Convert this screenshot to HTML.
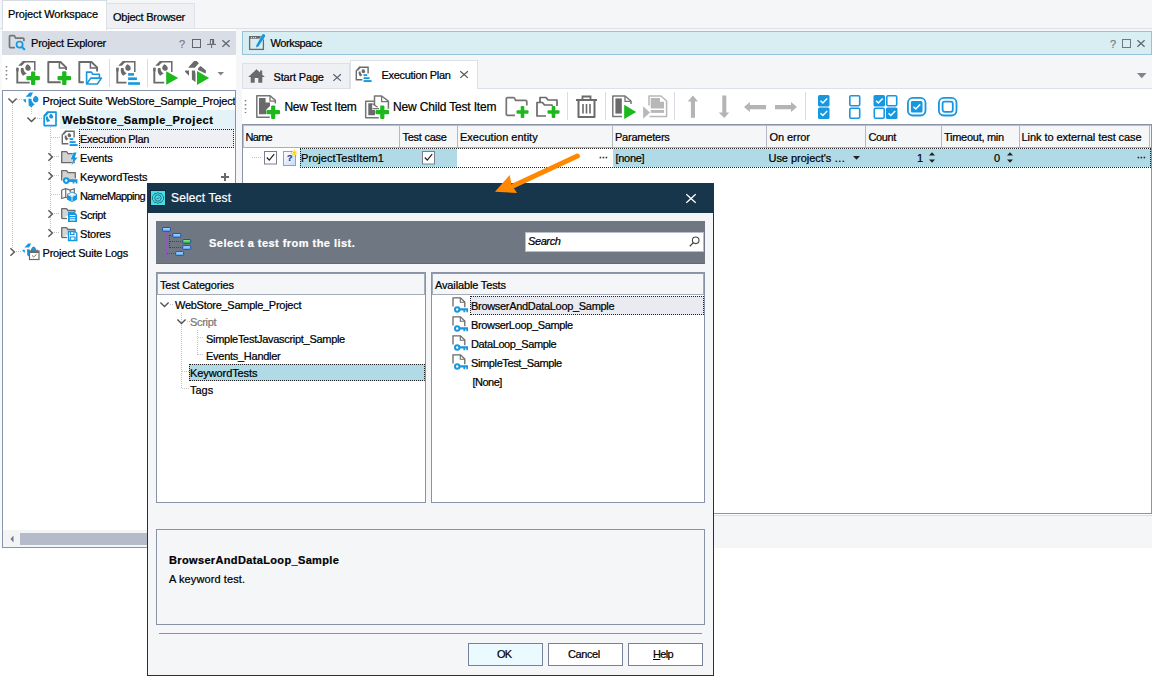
<!DOCTYPE html>
<html lang="en"><head><meta charset="utf-8"><title>Select Test</title><style>
html,body{margin:0;padding:0;}
body{width:1153px;height:678px;position:relative;overflow:hidden;background:#fff;font-family:"Liberation Sans", sans-serif;font-size:11px;color:#000;}
body>div,body>svg,.t{position:absolute;box-sizing:border-box;}
.t{white-space:nowrap;-webkit-text-stroke:0.22px currentColor;}
svg{overflow:visible;}
</style></head>
<body>
<div style="left:0px;top:0px;width:1152px;height:29px;background:#f5f6f8;"></div>
<div style="left:0px;top:28px;width:1152px;height:1px;background:#dde0e7;"></div>
<div style="left:236px;top:29px;width:916px;height:26px;background:#f5f6f8;"></div>
<div style="left:236px;top:55px;width:6px;height:493px;background:#f5f6f8;"></div>
<div style="left:0px;top:29px;width:2px;height:519px;background:#f8f9fa;"></div>
<div style="left:2px;top:0px;width:105px;height:30px;background:#fff;border:1px solid #d5dae3;border-bottom:none;"></div>
<div style="left:106px;top:3px;width:89px;height:26px;background:#eef0f4;border:1px solid #dde0e7;"></div>
<span class="t" style="left:8.00px;top:8px;font-size:11px;line-height:13px;letter-spacing:-0.125px;">Project Workspace</span>
<span class="t" style="left:113.00px;top:11px;font-size:11px;line-height:13px;letter-spacing:-0.231px;">Object Browser</span>
<div style="left:2px;top:31px;width:234px;height:24px;background:#d9dde6;"></div>
<span class="t" style="left:31.00px;top:37px;font-size:11px;line-height:13px;letter-spacing:-0.200px;">Project Explorer</span>
<svg style="left:8px;top:34px;" width="18" height="18" viewBox="0 0 18 18"><path d="M7,13.6 H2.4 Q1.5,13.6 1.5,12.7 V2.6 Q1.5,1.7 2.4,1.7 H5.6 Q6.4,1.7 6.8,2.5 L7.6,4.2 H15 Q15.9,4.2 15.9,5.1 V7.2" fill="none" stroke="#757575" stroke-width="1.7"/><circle cx="11.6" cy="10.6" r="3.1" fill="none" stroke="#1797e0" stroke-width="1.7"/><path d="M13.9,12.9 L16.3,15.2" stroke="#1797e0" stroke-width="2.1" stroke-linecap="round"/></svg>
<span class="t" style="left:179.00px;top:38px;font-size:11px;line-height:13px;color:#777c8a;">?</span>
<svg style="left:192px;top:39px;" width="10" height="10" viewBox="0 0 10 10"><rect x="0.5" y="0.5" width="8" height="8" fill="none" stroke="#5f6673" stroke-width="1"/></svg>
<svg style="left:207px;top:39px;" width="9" height="9" viewBox="0 0 9 9"><path d="M3,0.5 H7 M3.4,0.5 V5 M0,5.4 H9 M4.6,5.4 V9" fill="none" stroke="#5f6673" stroke-width="1"/><rect x="5.2" y="0.5" width="1.9" height="4.6" fill="#5f6673"/></svg>
<svg style="left:222px;top:40px;" width="8" height="7" viewBox="0 0 8 7"><path d="M0.4,0.2 L7.6,6.8 M7.6,0.2 L0.4,6.8" stroke="#5f6673" stroke-width="1.25"/></svg>
<div style="left:2px;top:55px;width:234px;height:35px;background:#fff;"></div>
<svg style="left:5px;top:65px;" width="3" height="18" viewBox="0 0 3 18"><path d="M1.5,1 V17" stroke="#858585" stroke-width="1.6" stroke-dasharray="1.6,2.4"/></svg>
<svg style="left:16px;top:60px;" width="24" height="25" viewBox="0 0 24 25"><path d="M6.8,1.7 H18.8 V10.5" fill="none" stroke="#6a6a6a" stroke-width="1.5"/><path d="M2.2,5.8 L6.8,1 L9.6,1.7 L5.8,5.8 Z" fill="#6a6a6a"/><path d="M1.3,7.8 V22.6 H13.7" fill="none" stroke="#6a6a6a" stroke-width="1.9"/><rect x="0.35" y="7.8" width="2.3" height="3.6" fill="#6a6a6a"/><path d="M5,8 C4.2,11 5,14 7.2,15.8 L10.8,13.2 C8.6,12.4 7.5,10.4 7.5,8 Z" fill="#6a6a6a"/><path d="M11.3,4.2 C13.6,5 15.1,7 14.7,8.9 C14.1,10.9 11.2,11.3 9.8,9.7 C8.6,8 9.4,5.6 11.3,4.2 Z" fill="#6a6a6a"/><rect x="10.399999999999999" y="16.049999999999997" width="13.5" height="4.2" rx="1" fill="#1cb81c"/><rect x="15.049999999999999" y="11.399999999999999" width="4.2" height="13.5" rx="1" fill="#1cb81c"/></svg>
<svg style="left:47px;top:60px;" width="24" height="25" viewBox="0 0 24 25"><path d="M13.7,22.3 H1.3 V2 H13.5 L19.1,7.4 V10" fill="none" stroke="#6a6a6a" stroke-width="1.9" stroke-linejoin="round"/><path d="M12.4,2 V8 H19" fill="none" stroke="#6a6a6a" stroke-width="1.5"/><rect x="10.5" y="15.950000000000001" width="13.6" height="4.3" rx="1" fill="#1cb81c"/><rect x="15.15" y="11.3" width="4.3" height="13.6" rx="1" fill="#1cb81c"/></svg>
<svg style="left:78px;top:60px;" width="24" height="25" viewBox="0 0 24 25"><path d="M5.8,22.3 H1.3 V2 H13.5 L19.1,7.4 V11.5" fill="none" stroke="#6a6a6a" stroke-width="1.9" stroke-linejoin="round"/><path d="M12.4,2 V8 H19" fill="none" stroke="#6a6a6a" stroke-width="1.5"/><path d="M8.6,23.5 V12.1 H13.4 L14.6,14.2 H21.4 V17.5" fill="#fff" stroke="#1797e0" stroke-width="1.6" stroke-linejoin="round"/><path d="M8.6,24 L12.8,18.1 H23.4 L19.3,24 Z" fill="#fff" stroke="#1797e0" stroke-width="1.6" stroke-linejoin="round"/></svg>
<div style="left:109px;top:59px;width:1px;height:28px;background:#d9dce2;"></div>
<svg style="left:116px;top:60px;" width="24" height="25" viewBox="0 0 24 25"><path d="M6.8,1.7 H18.8 V12" fill="none" stroke="#6a6a6a" stroke-width="1.5"/><path d="M2.2,5.8 L6.8,1 L9.6,1.7 L5.8,5.8 Z" fill="#6a6a6a"/><path d="M1.3,7.8 V22.6 H10.4" fill="none" stroke="#6a6a6a" stroke-width="1.9"/><rect x="0.35" y="7.8" width="2.3" height="3.6" fill="#6a6a6a"/><path d="M5,8 C4.2,11 5,14 7.2,15.8 L10.8,13.2 C8.6,12.4 7.5,10.4 7.5,8 Z" fill="#6a6a6a"/><path d="M11.3,4.2 C13.6,5 15.1,7 14.7,8.9 C14.1,10.9 11.2,11.3 9.8,9.7 C8.6,8 9.4,5.6 11.3,4.2 Z" fill="#6a6a6a"/><rect x="12.1" y="13.1" width="5.9" height="2.6" fill="#1797e0"/><rect x="12.1" y="17.4" width="8.8" height="2.7" fill="#1797e0"/><rect x="12.1" y="22.2" width="11.9" height="2.6" fill="#1797e0"/></svg>
<div style="left:147px;top:59px;width:1px;height:28px;background:#d9dce2;"></div>
<svg style="left:153px;top:60px;" width="24" height="25" viewBox="0 0 24 25"><path d="M6.8,1.7 H18.8 V12" fill="none" stroke="#6a6a6a" stroke-width="1.5"/><path d="M2.2,5.8 L6.8,1 L9.6,1.7 L5.8,5.8 Z" fill="#6a6a6a"/><path d="M1.3,7.8 V22.6 H11.2" fill="none" stroke="#6a6a6a" stroke-width="1.9"/><rect x="0.35" y="7.8" width="2.3" height="3.6" fill="#6a6a6a"/><path d="M5,8 C4.2,11 5,14 7.2,15.8 L10.8,13.2 C8.6,12.4 7.5,10.4 7.5,8 Z" fill="#6a6a6a"/><path d="M11.3,4.2 C13.6,5 15.1,7 14.7,8.9 C14.1,10.9 11.2,11.3 9.8,9.7 C8.6,8 9.4,5.6 11.3,4.2 Z" fill="#6a6a6a"/><path d="M13.2,11.2 L25.2,18 L13.2,24.8 Z" fill="#1cb81c"/></svg>
<svg style="left:184px;top:60px;" width="26" height="25" viewBox="0 0 26 25"><path d="M4,7.7 L10.1,1.1 L12.7,1.1 L14.9,3.3 L10.8,7.7 Z" fill="#6a6a6a"/><path d="M14.2,7.9 L16.6,6 L22,10.6 L21.7,13.6 L14,9.9 Z" fill="#6a6a6a"/><path d="M1.1,10.6 H5 V15.7 L1.1,12 Z" fill="#6a6a6a"/><path d="M7.9,10.6 H10.8 L11.5,13.7 V22 L7.9,19.6 Z" fill="#6a6a6a"/><path d="M13,11.1 L25.1,18.1 L13,25 Z" fill="#1cb81c"/></svg>
<svg style="left:217px;top:72px;" width="8" height="4" viewBox="0 0 8 4"><path d="M0.5,0 H7 L3.75,3.5 Z" fill="#808080"/></svg>
<div style="left:2px;top:90px;width:234px;height:458px;background:#fff;border:1px solid #8794ab;"></div>
<div style="left:60px;top:110px;width:175px;height:19px;background:#e4f3f8;"></div>
<div style="left:79px;top:129px;width:155px;height:19px;background:#eef0f4;border:1px dotted #222;"></div>
<svg style="left:3px;top:90px;" width="100" height="170" viewBox="0 0 100 170"><g stroke="#c2c2c2" stroke-width="1" stroke-dasharray="1,1" fill="none"><path d="M9.5,13 V158"/><path d="M14,9.5 H20"/><path d="M28.5,17 V25"/><path d="M34,28.5 H39"/><path d="M47.5,37 V143"/><path d="M48,47.5 H57"/><path d="M51,66.5 H57"/><path d="M51,85.5 H57"/><path d="M48,104.5 H57"/><path d="M51,123.5 H57"/><path d="M51,142.5 H57"/><path d="M13,161.5 H19"/></g></svg>
<svg style="left:8px;top:98px;" width="9" height="5" viewBox="0 0 9 5"><path d="M0.4,0.4 L4.5,4.4 L8.6,0.4" fill="none" stroke="#555" stroke-width="1.4"/></svg>
<svg style="left:27px;top:117px;" width="9" height="5" viewBox="0 0 9 5"><path d="M0.4,0.4 L4.5,4.4 L8.6,0.4" fill="none" stroke="#555" stroke-width="1.4"/></svg>
<svg style="left:48px;top:153px;" width="5" height="8" viewBox="0 0 5 8"><path d="M0.4,0.3 L4.4,4 L0.4,7.7" fill="none" stroke="#555" stroke-width="1.4"/></svg>
<svg style="left:48px;top:172px;" width="5" height="8" viewBox="0 0 5 8"><path d="M0.4,0.3 L4.4,4 L0.4,7.7" fill="none" stroke="#555" stroke-width="1.4"/></svg>
<svg style="left:48px;top:210px;" width="5" height="8" viewBox="0 0 5 8"><path d="M0.4,0.3 L4.4,4 L0.4,7.7" fill="none" stroke="#555" stroke-width="1.4"/></svg>
<svg style="left:48px;top:229px;" width="5" height="8" viewBox="0 0 5 8"><path d="M0.4,0.3 L4.4,4 L0.4,7.7" fill="none" stroke="#555" stroke-width="1.4"/></svg>
<svg style="left:10px;top:248px;" width="5" height="8" viewBox="0 0 5 8"><path d="M0.4,0.3 L4.4,4 L0.4,7.7" fill="none" stroke="#555" stroke-width="1.4"/></svg>
<svg style="left:24px;top:93px;" width="15" height="15" viewBox="0 0 15 15"><path d="M1.6,3.8 L5.7,-0.5 L9.1,-0.5 L6.9,3.8 Z" fill="#1797e0"/><path d="M11.6,2.7 C13.8,3.2 14.8,5.4 14.4,7.3 C13.7,9.8 10.5,10.4 9.2,8.1 C8.4,6 9.5,3.5 11.6,2.7 Z" fill="#1797e0"/><path d="M-0.6,6.3 H2 V9.9 L-0.6,7.5 Z" fill="#1797e0"/><path d="M4.4,5.7 H7.4 C7.4,8 8.5,10 10.8,11.2 L7.2,14.2 L4.7,12.4 Z" fill="#1797e0"/></svg>
<svg style="left:43px;top:111px;" width="15" height="16" viewBox="0 0 15 16"><path d="M4.6,1.1 H13 V14.6 H1.2 V4.8 Z" fill="#fff" stroke="#1797e0" stroke-width="1.7" stroke-linejoin="round"/><path d="M0.4,5.2 L4.6,0.4 L6.6,1 L3,5.2 Z" fill="#1797e0"/><g transform="translate(-0.6,-0.2) scale(1.12)"><path d="M3.2,5.2 C2.7,7.2 3.2,9.1 4.7,10.3 L7,8.6 C5.6,8 4.9,6.8 4.9,5.2 Z" fill="#1797e0"/><path d="M7.3,2.7 C8.8,3.2 9.8,4.5 9.6,5.8 C9.2,7.1 7.3,7.3 6.4,6.3 C5.6,5.2 6.1,3.6 7.3,2.7 Z" fill="#1797e0"/></g></svg>
<svg style="left:61px;top:130px;" width="17" height="16" viewBox="0 0 17 16"><path d="M4.2,1.2 H13.1 V7.6" fill="none" stroke="#6a6a6a" stroke-width="1.4"/><path d="M1.3,4.6 V13.8 H7.4" fill="none" stroke="#6a6a6a" stroke-width="1.4"/><path d="M0.5,4.8 L4.2,0.5 L6.2,1.2 L3,4.8 Z" fill="#6a6a6a"/><g transform="translate(0.6,0.2)"><path d="M3.2,5.2 C2.7,7.2 3.2,9.1 4.7,10.3 L7,8.6 C5.6,8 4.9,6.8 4.9,5.2 Z" fill="#6a6a6a"/><path d="M7.3,2.7 C8.8,3.2 9.8,4.5 9.6,5.8 C9.2,7.1 7.3,7.3 6.4,6.3 C5.6,5.2 6.1,3.6 7.3,2.7 Z" fill="#6a6a6a"/></g><rect x="8.6" y="8.2" width="3.6" height="1.9" fill="#1797e0"/><rect x="8.6" y="11.2" width="6" height="1.9" fill="#1797e0"/><rect x="8.6" y="14.1" width="8" height="1.9" fill="#1797e0"/></svg>
<svg style="left:61px;top:151px;" width="17" height="15" viewBox="0 0 17 15"><path d="M0.7,11.7 V0.7 H5.6 L7,2.6 H13.3 V11.7 Z" fill="#d3d3d3" stroke="#6a6a6a" stroke-width="1.3" stroke-linejoin="round"/><path d="M12.6,1.6 L9.6,8.4 H12.2 L10.4,14.6 L16.4,6.4 H13.6 L15.6,1.6 Z" fill="#1797e0" stroke="#fff" stroke-width="0.8" paint-order="stroke"/></svg>
<svg style="left:61px;top:170px;" width="17" height="15" viewBox="0 0 17 15"><path d="M0.7,10.5 V0.7 H5.6 L7,2.6 H14.3 V8.5" fill="#d3d3d3" stroke="#6a6a6a" stroke-width="1.3" stroke-linejoin="round"/><rect x="1.4" y="7" width="12.2" height="3.5" fill="#d3d3d3"/><circle cx="5.2" cy="10.6" r="2.3" fill="#fff" stroke="#1797e0" stroke-width="2.1"/><path d="M7.8,9.3 H16.4 V13.6 H14.6 V11.9 H13.4 V13.6 H11.6 V11.9 H7.8 Z" fill="#1797e0"/></svg>
<svg style="left:61px;top:188px;" width="17" height="15" viewBox="0 0 17 15"><path d="M0.7,2 L4.7,0.7 L9.2,2 L13.3,0.7 V5" fill="none" stroke="#6a6a6a" stroke-width="1.2"/><path d="M0.7,2 V10.5 L4.7,9.2 L6,9.6 M4.7,0.7 V9.2 M9.2,2 V4" fill="none" stroke="#6a6a6a" stroke-width="1.2"/><path d="M11,3.6 L16,6 V11.5 L11,14.3 L6,11.5 V6 Z" fill="#1797e0"/><path d="M6.8,6.5 L11,8.6 L15.2,6.5 M11,8.6 V13.5" stroke="#fff" stroke-width="0.9" fill="none"/><path d="M11,4.6 L14.6,6.3 L11,8 L7.4,6.3 Z" fill="#fff"/></svg>
<svg style="left:61px;top:208px;" width="17" height="15" viewBox="0 0 17 15"><path d="M0.7,10.5 V0.7 H5.5 L7,2.5 H14 V4" fill="#d4d4d4" stroke="#6a6a6a" stroke-width="1.3" stroke-linejoin="round"/><path d="M0.7,10.5 H6" stroke="#6a6a6a" stroke-width="1.3"/><path d="M7,4 H13.5 L16,6.5 V14 H7 Z" fill="#1797e0"/><path d="M8.7,7.5 H14.3 M8.7,9.7 H14.3 M8.7,11.9 H14.3" stroke="#fff" stroke-width="1.1"/></svg>
<svg style="left:61px;top:227px;" width="17" height="15" viewBox="0 0 17 15"><path d="M0.7,10.5 V0.7 H5.5 L7,2.5 H14 V4" fill="#d4d4d4" stroke="#6a6a6a" stroke-width="1.3" stroke-linejoin="round"/><path d="M0.7,10.5 H6" stroke="#6a6a6a" stroke-width="1.3"/><path d="M7.5,4.5 H14 L15.8,6.3 V13.5 H7.5 Z" fill="#fff" stroke="#1797e0" stroke-width="1.4"/><path d="M9.5,4.5 V7.5 H13 V4.5 M9.3,13.5 V10 H14 V13.5" fill="none" stroke="#1797e0" stroke-width="1.2"/></svg>
<svg style="left:23px;top:244px;" width="17" height="16" viewBox="0 0 17 16"><g transform="scale(0.9)"><path d="M1.6,3.8 L5.7,-0.5 L9.1,-0.5 L6.9,3.8 Z" fill="#1797e0"/><path d="M11.6,2.7 C13.8,3.2 14.8,5.4 14.4,7.3 C13.7,9.8 10.5,10.4 9.2,8.1 C8.4,6 9.5,3.5 11.6,2.7 Z" fill="#1797e0"/><path d="M-0.6,6.3 H2 V9.9 L-0.6,7.5 Z" fill="#1797e0"/><path d="M4.4,5.7 H7.4 C7.4,8 8.5,10 10.8,11.2 L7.2,14.2 L4.7,12.4 Z" fill="#1797e0"/></g><rect x="6.5" y="7" width="9.5" height="8.5" fill="#fff" stroke="#6a6a6a" stroke-width="1.2"/><path d="M6.5,8 H16" stroke="#6a6a6a" stroke-width="2"/><path d="M8.5,5.5 V7.5 M14,5.5 V7.5" stroke="#6a6a6a" stroke-width="1.2"/><path d="M9,11.5 L10.7,13 L13.5,10.3" fill="none" stroke="#6a6a6a" stroke-width="1"/></svg>
<span class="t" style="left:42.50px;top:95px;font-size:11px;line-height:13px;letter-spacing:-0.189px;width:192.50px;overflow:hidden;">Project Suite 'WebStore_Sample_Project</span>
<span class="t" style="left:62.00px;top:114px;font-size:11px;line-height:13px;font-weight:bold;letter-spacing:0.500px;">WebStore_Sample_Project</span>
<span class="t" style="left:80.00px;top:133px;font-size:11px;line-height:13px;letter-spacing:-0.308px;">Execution Plan</span>
<span class="t" style="left:80.00px;top:152px;font-size:11px;line-height:13px;letter-spacing:-0.200px;">Events</span>
<span class="t" style="left:80.00px;top:171px;font-size:11px;line-height:13px;letter-spacing:-0.091px;">KeywordTests</span>
<span class="t" style="left:80.00px;top:190px;font-size:11px;line-height:13px;letter-spacing:-0.600px;">NameMapping</span>
<span class="t" style="left:80.00px;top:209px;font-size:11px;line-height:13px;letter-spacing:-0.400px;">Script</span>
<span class="t" style="left:80.00px;top:228px;font-size:11px;line-height:13px;letter-spacing:-0.200px;">Stores</span>
<span class="t" style="left:42.50px;top:247px;font-size:11px;line-height:13px;letter-spacing:-0.206px;">Project Suite Logs</span>
<svg style="left:221px;top:173px;" width="8" height="8" viewBox="0 0 8 8"><rect x="0" y="3" width="8" height="2" fill="#6a6a6a"/><rect x="3" y="0" width="2" height="8" fill="#6a6a6a"/></svg>
<div style="left:3px;top:530px;width:232px;height:17px;background:#f3f4f6;"></div>
<div style="left:20px;top:533px;width:215px;height:12px;background:#b5bbc9;"></div>
<svg style="left:10px;top:535px;" width="4" height="8" viewBox="0 0 4 8"><path d="M3.5,0.5 L0.5,4 L3.5,7.5 Z" fill="#6c7890"/></svg>
<div style="left:242px;top:31px;width:910px;height:24px;background:#d9eef3;border:1px solid #97c3da;"></div>
<svg style="left:249px;top:34px;" width="17" height="17" viewBox="0 0 17 17"><rect x="0.6" y="2.7" width="13.8" height="12.7" fill="none" stroke="#6a6a6a" stroke-width="1.3"/><rect x="0" y="2" width="11.5" height="2.7" fill="#6a6a6a"/><path d="M2,3.5 H3 M4,3.5 H5 M6,3.5 H7" stroke="#e6f0f2" stroke-width="0.9"/><path d="M13.3,0.6 Q14.4,-0.3 15.6,0.5 Q16.6,1.3 16,2.5 L9.4,12.6 L7.2,13.6 L7.4,11.2 Z" fill="#1797e0" stroke="#d9eef3" stroke-width="0.8" paint-order="stroke"/></svg>
<span class="t" style="left:270.50px;top:37px;font-size:11px;line-height:13px;letter-spacing:-0.375px;">Workspace</span>
<span class="t" style="left:1110.00px;top:38px;font-size:11px;line-height:13px;color:#777c8a;">?</span>
<svg style="left:1122px;top:39px;" width="10" height="10" viewBox="0 0 10 10"><rect x="0.5" y="0.5" width="8" height="8" fill="none" stroke="#6f7682" stroke-width="1"/></svg>
<svg style="left:1137px;top:40px;" width="8" height="7" viewBox="0 0 8 7"><path d="M0.4,0.2 L7.6,6.8 M7.6,0.2 L0.4,6.8" stroke="#5f6673" stroke-width="1.25"/></svg>
<div style="left:242px;top:55px;width:910px;height:34px;background:#f5f6f8;"></div>
<div style="left:242px;top:88px;width:910px;height:1px;background:#dde0e7;"></div>
<div style="left:242px;top:63px;width:108px;height:26px;background:#eef0f4;border:1px solid #dde0e7;"></div>
<div style="left:350px;top:60px;width:128px;height:29px;background:#fff;border:1px solid #dde0e7;border-bottom:none;"></div>
<svg style="left:248px;top:69px;" width="17" height="14" viewBox="0 0 17 14"><path d="M8.5,0.3 L16.8,8 H14.3 V13.7 H10.3 V9 H6.7 V13.7 H2.7 V8 H0.2 Z" fill="#6a6a6a"/><rect x="12" y="1.5" width="2.2" height="4" fill="#6a6a6a"/></svg>
<span class="t" style="left:273.50px;top:71px;font-size:11px;line-height:13px;letter-spacing:-0.167px;">Start Page</span>
<svg style="left:333px;top:73.5px;" width="8" height="7" viewBox="0 0 8 7"><path d="M0.3,0.2 L7.9,6.9 M7.9,0.2 L0.3,6.9" stroke="#5a6270" stroke-width="1.2"/></svg>
<svg style="left:355px;top:66px;" width="17" height="16" viewBox="0 0 17 16"><path d="M4.2,1.2 H13.1 V7.6" fill="none" stroke="#6a6a6a" stroke-width="1.4"/><path d="M1.3,4.6 V13.8 H7.4" fill="none" stroke="#6a6a6a" stroke-width="1.4"/><path d="M0.5,4.8 L4.2,0.5 L6.2,1.2 L3,4.8 Z" fill="#6a6a6a"/><g transform="translate(0.6,0.2)"><path d="M3.2,5.2 C2.7,7.2 3.2,9.1 4.7,10.3 L7,8.6 C5.6,8 4.9,6.8 4.9,5.2 Z" fill="#6a6a6a"/><path d="M7.3,2.7 C8.8,3.2 9.8,4.5 9.6,5.8 C9.2,7.1 7.3,7.3 6.4,6.3 C5.6,5.2 6.1,3.6 7.3,2.7 Z" fill="#6a6a6a"/></g><rect x="8.6" y="8.2" width="3.6" height="1.9" fill="#1797e0"/><rect x="8.6" y="11.2" width="6" height="1.9" fill="#1797e0"/><rect x="8.6" y="14.1" width="8" height="1.9" fill="#1797e0"/></svg>
<span class="t" style="left:381.50px;top:69px;font-size:11px;line-height:13px;letter-spacing:-0.308px;">Execution Plan</span>
<svg style="left:460px;top:71px;" width="8" height="7" viewBox="0 0 8 7"><path d="M0.3,0.2 L7.9,6.9 M7.9,0.2 L0.3,6.9" stroke="#555" stroke-width="1.2"/></svg>
<svg style="left:1137px;top:73px;" width="10" height="6" viewBox="0 0 10 6"><path d="M0,0 H9.5 L4.75,5.2 Z" fill="#7f848e"/></svg>
<div style="left:242px;top:89px;width:910px;height:35px;background:#fff;"></div>
<svg style="left:244px;top:99px;" width="3" height="15" viewBox="0 0 3 15"><path d="M1.5,1 V14" stroke="#858585" stroke-width="1.6" stroke-dasharray="1.6,2.4"/></svg>
<svg style="left:256px;top:95px;" width="25" height="25" viewBox="0 0 25 25"><path d="M13.8,22.2 H0.8 V0.8 H14.1 L19.3,5.4 V8.5" fill="none" stroke="#757575" stroke-width="1.5" stroke-linejoin="round"/><path d="M3,3 H9.6 V7.5 H14 V11 L10,15 V19.3 H3 Z" fill="#6a6a6a"/><path d="M14,0.8 V6.2 H19.3" fill="none" stroke="#757575" stroke-width="1.3"/><rect x="10.399999999999999" y="15.1" width="13.6" height="4.2" rx="1" fill="#1cb81c"/><rect x="15.1" y="10.399999999999999" width="4.2" height="13.6" rx="1" fill="#1cb81c"/></svg>
<span class="t" style="left:284.50px;top:100px;font-size:12px;line-height:14px;letter-spacing:-0.292px;">New Test Item</span>
<svg style="left:364px;top:95px;" width="26" height="25" viewBox="0 0 26 25"><path d="M14.8,22.7 H1.7 V6.2 H10" fill="none" stroke="#757575" stroke-width="1.5" stroke-linejoin="round"/><path d="M4.3,8.2 H8.2 V15 H11 V20.3 H4.3 Z" fill="#6a6a6a"/><path d="M10.5,10 V1 H17.6 L24.4,6.1 V13.7" fill="none" stroke="#757575" stroke-width="1.5" stroke-linejoin="round"/><path d="M17.6,1 V6.6 H24.4" fill="none" stroke="#757575" stroke-width="1.3"/><path d="M8.4,8.6 L13.6,12.2 M8.6,13.6 H15" fill="none" stroke="#757575" stroke-width="1.3"/><rect x="11.5" y="15.1" width="13.6" height="4.2" rx="1" fill="#1cb81c"/><rect x="16.2" y="10.399999999999999" width="4.2" height="13.6" rx="1" fill="#1cb81c"/></svg>
<span class="t" style="left:393.00px;top:100px;font-size:12px;line-height:14px;letter-spacing:-0.167px;">New Child Test Item</span>
<svg style="left:505px;top:96px;" width="24" height="23" viewBox="0 0 24 23"><path d="M10,19.3 H2.5 Q1.3,19.3 1.3,18 V2.8 Q1.3,1.6 2.5,1.6 H8.5 Q9.4,1.6 9.8,2.6 L10.6,4.4 H20.5 Q21.8,4.4 21.8,5.6 V9.5" fill="none" stroke="#757575" stroke-width="1.7"/><rect x="11.5" y="14.2" width="12" height="3.6" rx="1" fill="#1cb81c"/><rect x="15.7" y="10" width="3.6" height="12" rx="1" fill="#1cb81c"/></svg>
<svg style="left:536px;top:96px;" width="24" height="23" viewBox="0 0 24 23"><path d="M4,6 V1.5 H10 L12,4 H21 V10" fill="none" stroke="#6a6a6a" stroke-width="1.7" stroke-linejoin="round"/><path d="M10,20 H1 V6.5 H6.5 L8.5,9 H16 V10" fill="none" stroke="#6a6a6a" stroke-width="1.7" stroke-linejoin="round"/><rect x="11.5" y="14.2" width="12" height="3.6" rx="1" fill="#1cb81c"/><rect x="15.7" y="10" width="3.6" height="12" rx="1" fill="#1cb81c"/></svg>
<div style="left:567px;top:92px;width:1px;height:28px;background:#d9dce2;"></div>
<svg style="left:575px;top:95px;" width="23" height="24" viewBox="0 0 23 24"><path d="M1,5 H22" stroke="#6a6a6a" stroke-width="2"/><path d="M7.5,4.5 V1.5 H15.5 V4.5" fill="none" stroke="#6a6a6a" stroke-width="1.8"/><path d="M3.5,5 V22 H19.5 V5" fill="none" stroke="#6a6a6a" stroke-width="2" stroke-linejoin="round"/><path d="M8,9 V18.5 M11.5,9 V18.5 M15,9 V18.5" stroke="#6a6a6a" stroke-width="1.6"/></svg>
<div style="left:605px;top:92px;width:1px;height:28px;background:#d9dce2;"></div>
<svg style="left:611px;top:95px;" width="26" height="25" viewBox="0 0 26 25"><path d="M11,21.5 H1.8 V1 H14 L20,6 V9" fill="none" stroke="#757575" stroke-width="1.5" stroke-linejoin="round"/><path d="M4.4,3.4 H10.8 V18.6 H4.4 Z" fill="#6a6a6a"/><path d="M14,1 V6.3 H20" fill="none" stroke="#757575" stroke-width="1.3"/><path d="M13.2,9.8 L25.2,17 L13.2,24 Z" fill="#1cb81c"/></svg>
<svg style="left:642px;top:95px;" width="26" height="25" viewBox="0 0 26 25"><path d="M7,10.5 V1 H19 L24.6,6 V21.6 H7.5" fill="none" stroke="#b8b8b8" stroke-width="1.5" stroke-linejoin="round"/><path d="M8.7,3.1 H18 V6.8 H22 V13.4 H8.7 Z" fill="#b8b8b8"/><rect x="8.7" y="15" width="13.3" height="2.9" fill="#b8b8b8"/><path d="M1.1,11.2 L8,17.5 L1.1,23.8 Z" fill="#b8b8b8"/></svg>
<div style="left:674px;top:92px;width:1px;height:28px;background:#d9dce2;"></div>
<svg style="left:687px;top:95px;" width="12" height="23" viewBox="0 0 12 23"><path d="M5.9,0.6 L11,6.5 H8 V22.7 H3.9 V6.5 H0.7 Z" fill="#b4b4b4"/></svg>
<svg style="left:718px;top:95px;" width="12" height="23" viewBox="0 0 12 23"><path d="M6.3,23 L11.2,17.4 H8.3 V0.6 H4.3 V17.4 H0.7 Z" fill="#b4b4b4"/></svg>
<svg style="left:744px;top:102px;" width="23" height="11" viewBox="0 0 23 11"><path d="M0,5.1 L5.9,0.1 V3 H22.1 V7.2 H5.9 V10.1 Z" fill="#b4b4b4"/></svg>
<svg style="left:775px;top:102px;" width="23" height="11" viewBox="0 0 23 11"><path d="M22,5.1 L16,0.1 V3 H0 V7.2 H16 V10.1 Z" fill="#b4b4b4"/></svg>
<div style="left:805px;top:92px;width:1px;height:28px;background:#d9dce2;"></div>
<svg style="left:818px;top:95px;" width="12" height="24" viewBox="0 0 12 24"><rect x="0" y="0" width="11.5" height="11.5" rx="1.5" fill="#1797e0"/><path d="M2.53,5.75 L4.83,8.049999999999999 L9.200000000000001,3.4499999999999997" fill="none" stroke="#fff" stroke-width="1.5"/><rect x="0" y="12.5" width="11.5" height="11.5" rx="1.5" fill="#1797e0"/><path d="M2.53,18.25 L4.83,20.549999999999997 L9.200000000000001,15.95" fill="none" stroke="#fff" stroke-width="1.5"/></svg>
<svg style="left:849px;top:95px;" width="12" height="24" viewBox="0 0 12 24"><rect x="0.8" y="0.8" width="9.9" height="9.9" rx="1.2" fill="#fff" stroke="#1797e0" stroke-width="1.6"/><rect x="0.8" y="13.3" width="9.9" height="9.9" rx="1.2" fill="#fff" stroke="#1797e0" stroke-width="1.6"/></svg>
<svg style="left:873px;top:95px;" width="25" height="24" viewBox="0 0 25 24"><rect x="0.5" y="0" width="11.5" height="11.5" rx="1.5" fill="#1797e0"/><path d="M3.03,5.75 L5.33,8.049999999999999 L9.700000000000001,3.4499999999999997" fill="none" stroke="#fff" stroke-width="1.5"/><rect x="13.8" y="0.8" width="9.9" height="9.9" rx="1.2" fill="#fff" stroke="#1797e0" stroke-width="1.6"/><rect x="1.3" y="13.3" width="9.9" height="9.9" rx="1.2" fill="#fff" stroke="#1797e0" stroke-width="1.6"/><rect x="13" y="12.5" width="11.5" height="11.5" rx="1.5" fill="#1797e0"/><path d="M15.53,18.25 L17.83,20.549999999999997 L22.200000000000003,15.95" fill="none" stroke="#fff" stroke-width="1.5"/></svg>
<svg style="left:907px;top:97px;" width="20" height="20" viewBox="0 0 20 20"><rect x="0.9" y="0.9" width="17.6" height="17.6" rx="5" fill="#fff" stroke="#1797e0" stroke-width="1.8"/><rect x="3.9" y="3.9" width="11.6" height="11.6" rx="1.5" fill="#1797e0"/><path d="M6.452,9.7 L8.772,12.02 L13.18,7.38" fill="none" stroke="#fff" stroke-width="1.5"/></svg>
<svg style="left:938px;top:97px;" width="20" height="20" viewBox="0 0 20 20"><rect x="0.9" y="0.9" width="17.6" height="17.6" rx="5" fill="#fff" stroke="#1797e0" stroke-width="1.8"/><rect x="4.6" y="4.6" width="10.2" height="10.2" rx="2" fill="#fff" stroke="#1797e0" stroke-width="1.8"/></svg>
<div style="left:242px;top:124px;width:910px;height:390px;background:#fff;border:1px solid #8a93a8;"></div>
<div style="left:243px;top:125px;width:908px;height:23px;background:#f5f6f8;border-top:1px solid #b9bfcb;border-left:1px solid #b9bfcb;border-bottom:1px solid #a9aeb9;"></div>
<div style="left:399px;top:126px;width:1px;height:21px;background:#b4b8c2;"></div>
<div style="left:457px;top:126px;width:1px;height:21px;background:#b4b8c2;"></div>
<div style="left:612px;top:126px;width:1px;height:21px;background:#b4b8c2;"></div>
<div style="left:766px;top:126px;width:1px;height:21px;background:#b4b8c2;"></div>
<div style="left:865px;top:126px;width:1px;height:21px;background:#b4b8c2;"></div>
<div style="left:941px;top:126px;width:1px;height:21px;background:#b4b8c2;"></div>
<div style="left:1019px;top:126px;width:1px;height:21px;background:#b4b8c2;"></div>
<div style="left:1149px;top:126px;width:1px;height:21px;background:#b4b8c2;"></div>
<span class="t" style="left:245.50px;top:131px;font-size:11px;line-height:13px;letter-spacing:-0.700px;">Name</span>
<span class="t" style="left:402.50px;top:131px;font-size:11px;line-height:13px;letter-spacing:-0.250px;">Test case</span>
<span class="t" style="left:460.00px;top:131px;font-size:11px;line-height:13px;">Execution entity</span>
<span class="t" style="left:615.00px;top:131px;font-size:11px;line-height:13px;letter-spacing:-0.222px;">Parameters</span>
<span class="t" style="left:769.50px;top:131px;font-size:11px;line-height:13px;letter-spacing:-0.071px;">On error</span>
<span class="t" style="left:868.50px;top:131px;font-size:11px;line-height:13px;letter-spacing:-0.375px;">Count</span>
<span class="t" style="left:944.00px;top:131px;font-size:11px;line-height:13px;letter-spacing:-0.273px;">Timeout, min</span>
<span class="t" style="left:1021.50px;top:131px;font-size:11px;line-height:13px;letter-spacing:-0.060px;">Link to external test case</span>
<div style="left:300px;top:149px;width:157px;height:18px;background:#b0dae5;"></div>
<div style="left:613px;top:149px;width:538px;height:18px;background:#b0dae5;"></div>
<div style="left:300px;top:148px;width:851px;height:1px;border-top:1px dotted #222;"></div>
<div style="left:300px;top:167px;width:851px;height:1px;border-top:1px dotted #222;"></div>
<div style="left:300px;top:148px;width:1px;height:20px;border-left:1px dotted #222;"></div>
<div style="left:1150px;top:148px;width:1px;height:20px;border-left:1px dotted #222;"></div>
<svg style="left:252px;top:157px;" width="10" height="1" viewBox="0 0 10 1"><path d="M0,0.5 H10" stroke="#c2c2c2" stroke-dasharray="1,1"/></svg>
<svg style="left:264px;top:151px;" width="13" height="13" viewBox="0 0 13 13"><rect x="0.5" y="0.5" width="12" height="12.5" fill="#fff" stroke="#7c7e90" stroke-width="1"/><path d="M2.8,6.5 L5.3,9.2 L10.2,3.2" fill="none" stroke="#222" stroke-width="1.2"/></svg>
<svg style="left:283px;top:150px;" width="15" height="16" viewBox="0 0 15 16"><defs><linearGradient id="qg" x1="0" y1="0" x2="1" y2="1"><stop offset="0" stop-color="#ffffff"/><stop offset="1" stop-color="#c9daf5"/></linearGradient></defs><rect x="0.5" y="1.5" width="12" height="14" fill="url(#qg)" stroke="#8b9fd0" stroke-width="1"/><circle cx="11.3" cy="3" r="2.3" fill="#fff3a0"/><path d="M11.3,-0.3 V6.3 M8,3 H14.6 M9,0.7 L13.6,5.3 M13.6,0.7 L9,5.3" stroke="#f0c000" stroke-width="0.9" stroke-dasharray="1.2,0.9"/></svg>
<span class="t" style="left:287.00px;top:153px;font-size:9px;line-height:11px;font-weight:bold;color:#1a3a9a;">?</span>
<span class="t" style="left:301.00px;top:152px;font-size:11px;line-height:13px;letter-spacing:0.067px;">ProjectTestItem1</span>
<svg style="left:422px;top:151px;" width="13" height="13" viewBox="0 0 13 13"><rect x="0.5" y="0.5" width="12" height="12.5" fill="#fff" stroke="#7c7e90" stroke-width="1"/><path d="M2.8,6.5 L5.3,9.2 L10.2,3.2" fill="none" stroke="#222" stroke-width="1.2"/></svg>
<span class="t" style="left:598.50px;top:151px;font-size:11px;line-height:13px;letter-spacing:-0.700px;">···</span>
<span class="t" style="left:615.50px;top:152px;font-size:11px;line-height:13px;letter-spacing:-0.300px;">[none]</span>
<span class="t" style="left:768.50px;top:152px;font-size:11px;line-height:13px;letter-spacing:-0.036px;">Use project's …</span>
<svg style="left:853px;top:156px;" width="7" height="4" viewBox="0 0 7 4"><path d="M0,0 H7 L3.5,3.8 Z" fill="#222"/></svg>
<span class="t" style="left:917.00px;top:152px;font-size:11px;line-height:13px;">1</span>
<span class="t" style="left:994.00px;top:152px;font-size:11px;line-height:13px;">0</span>
<svg style="left:929px;top:152px;" width="6" height="11" viewBox="0 0 6 11"><path d="M0,3.5 L3,0.3 L6,3.5 Z M0,7.5 L3,10.7 L6,7.5 Z" fill="#222"/></svg>
<svg style="left:1007px;top:152px;" width="6" height="11" viewBox="0 0 6 11"><path d="M0,3.5 L3,0.3 L6,3.5 Z M0,7.5 L3,10.7 L6,7.5 Z" fill="#222"/></svg>
<span class="t" style="left:1136.50px;top:151px;font-size:11px;line-height:13px;letter-spacing:-0.700px;">···</span>
<div style="left:242px;top:515px;width:910px;height:33px;background:#f5f6f8;"></div>
<div style="left:242px;top:515px;width:910px;height:1px;background:#d9dde5;"></div>
<div style="left:147px;top:183px;width:567px;height:493px;background:#f5f6f8;border:1px solid #18364b;"></div>
<div style="left:147px;top:183px;width:567px;height:30px;background:#18364b;"></div>
<svg style="left:150px;top:190px;" width="16" height="16" viewBox="0 0 16 16"><rect x="0.5" y="0.5" width="15" height="15" fill="#4adde4" stroke="#0f2a3a" stroke-width="1"/><path d="M8,2.6 L9.6,3.6 L11.5,3.6 L12.4,5.2 L13.5,6.4 L13.5,9.6 L12.4,10.8 L11.5,12.4 L9.6,12.4 L8,13.4 L6.4,12.4 L4.5,12.4 L3.6,10.8 L2.5,9.6 L2.5,6.4 L3.6,5.2 L4.5,3.6 L6.4,3.6 Z" fill="none" stroke="#1f6a80" stroke-width="0.9"/><circle cx="8" cy="8" r="3.2" fill="none" stroke="#1f6a80" stroke-width="0.9"/><path d="M6.6,8 L7.7,9.1 L9.6,6.9" fill="none" stroke="#1f6a80" stroke-width="0.9"/></svg>
<span class="t" style="left:171.00px;top:191px;font-size:12px;line-height:14px;color:#fff;letter-spacing:0.150px;">Select Test</span>
<svg style="left:686px;top:194px;" width="10" height="9" viewBox="0 0 10 9"><path d="M0.3,0.2 L9.7,8.8 M9.7,0.2 L0.3,8.8" stroke="#fff" stroke-width="1.3"/></svg>
<div style="left:156px;top:221px;width:549px;height:43px;background:#6f7783;border-bottom:1px solid #626a76;"></div>
<svg style="left:161px;top:226px;" width="31" height="32" viewBox="0 0 31 32"><g stroke-width="1" stroke-dasharray="1,1" fill="none"><path d="M5.5,6 V32" stroke="#8a50b8"/><path d="M6,27.5 H14" stroke="#3a48b0"/><path d="M8.5,9 V22 M9,9.5 H12 M9,15.5 H21 M9,21.5 H21" stroke="#2a3a9a"/></g><rect x="1.5" y="1.5" width="8" height="3.8" rx="0.8" fill="#6cb4f7" stroke="#1f48a8" stroke-width="0.9"/><rect x="2.4" y="2.2" width="6.2" height="1.2" fill="#fff" opacity="0.45"/><rect x="11.8" y="7.5" width="8" height="3.8" rx="0.8" fill="#6cb4f7" stroke="#1f48a8" stroke-width="0.9"/><rect x="12.700000000000001" y="8.2" width="6.2" height="1.2" fill="#fff" opacity="0.45"/><rect x="21.7" y="13.5" width="8" height="3.8" rx="0.8" fill="#3cc83c" stroke="#1f48a8" stroke-width="0.9"/><rect x="22.599999999999998" y="14.2" width="6.2" height="1.2" fill="#fff" opacity="0.45"/><rect x="21.7" y="19.6" width="8" height="3.8" rx="0.8" fill="#6cb4f7" stroke="#1f48a8" stroke-width="0.9"/><rect x="22.599999999999998" y="20.3" width="6.2" height="1.2" fill="#fff" opacity="0.45"/><rect x="14.6" y="25.6" width="8" height="3.8" rx="0.8" fill="#6cb4f7" stroke="#1f48a8" stroke-width="0.9"/><rect x="15.5" y="26.3" width="6.2" height="1.2" fill="#fff" opacity="0.45"/></svg>
<span class="t" style="left:209.00px;top:237px;font-size:11px;line-height:13px;font-weight:bold;color:#fff;letter-spacing:0.463px;">Select a test from the list.</span>
<div style="left:525px;top:232px;width:179px;height:20px;background:#fff;border:1px solid #b9bdc4;"></div>
<span class="t" style="left:528.00px;top:235px;font-size:11px;line-height:13px;font-style:italic;letter-spacing:-0.400px;">Search</span>
<svg style="left:689px;top:236.4px;" width="11" height="11" viewBox="0 0 11 11"><circle cx="6.7" cy="4.3" r="3.3" fill="none" stroke="#444" stroke-width="1.1"/><path d="M4.4,6.6 L0.8,10.2" stroke="#444" stroke-width="1.3"/></svg>
<div style="left:156px;top:272px;width:270px;height:231px;background:#fff;border:1px solid #8893a8;"></div>
<div style="left:157px;top:273px;width:268px;height:22px;background:#f5f6f8;border:1px solid #a5acb9;border-top-color:#9098a6;"></div>
<div style="left:431px;top:272px;width:274px;height:231px;background:#fff;border:1px solid #8893a8;"></div>
<div style="left:432px;top:273px;width:272px;height:22px;background:#f5f6f8;border:1px solid #a5acb9;border-top-color:#9098a6;"></div>
<span class="t" style="left:160.00px;top:279px;font-size:11px;line-height:13px;letter-spacing:-0.179px;">Test Categories</span>
<span class="t" style="left:435.00px;top:279px;font-size:11px;line-height:13px;letter-spacing:-0.143px;">Available Tests</span>
<svg style="left:158px;top:296px;" width="60" height="100" viewBox="0 0 60 100"><g stroke="#c2c2c2" stroke-width="1" stroke-dasharray="1,1" fill="none"><path d="M12,8.5 H15"/><path d="M29,25.5 H32"/><path d="M23.5,17 V93"/><path d="M39.5,34 V59"/><path d="M40,41.5 H46"/><path d="M40,58.5 H46"/><path d="M24,75.5 H31"/><path d="M24,92.5 H31"/></g></svg>
<svg style="left:160px;top:302px;" width="9" height="5" viewBox="0 0 9 5"><path d="M0.4,0.4 L4.5,4.4 L8.6,0.4" fill="none" stroke="#555" stroke-width="1.4"/></svg>
<svg style="left:177px;top:319px;" width="9" height="5" viewBox="0 0 9 5"><path d="M0.4,0.4 L4.5,4.4 L8.6,0.4" fill="none" stroke="#555" stroke-width="1.4"/></svg>
<span class="t" style="left:175.00px;top:299px;font-size:11px;line-height:13px;letter-spacing:-0.273px;">WebStore_Sample_Project</span>
<span class="t" style="left:190.00px;top:316px;font-size:11px;line-height:13px;color:#787878;letter-spacing:-0.300px;">Script</span>
<span class="t" style="left:206.00px;top:333px;font-size:11px;line-height:13px;letter-spacing:-0.288px;">SimpleTestJavascript_Sample</span>
<span class="t" style="left:206.00px;top:350px;font-size:11px;line-height:13px;letter-spacing:-0.269px;">Events_Handler</span>
<div style="left:189px;top:364px;width:236px;height:17px;background:#b0dae5;border:1px dotted #222;"></div>
<span class="t" style="left:190.00px;top:367px;font-size:11px;line-height:13px;letter-spacing:-0.091px;">KeywordTests</span>
<span class="t" style="left:190.00px;top:384px;font-size:11px;line-height:13px;">Tags</span>
<div style="left:470px;top:296px;width:234px;height:19px;background:#e9ebf0;border:1px dotted #222;"></div>
<svg style="left:451px;top:297px;" width="17" height="16" viewBox="0 0 17 16"><path d="M2,9.5 V0.9 H9.5 L13.8,5 V10.2" fill="none" stroke="#6a6a6a" stroke-width="1.3"/><path d="M9.3,0.9 V5.2 H13.8" fill="none" stroke="#6a6a6a" stroke-width="1.1"/><circle cx="6.2" cy="12.5" r="2.2" fill="#fff" stroke="#1797e0" stroke-width="2"/><path d="M8.8,11.2 H17 V15.2 H15.3 V13.6 H14.2 V15.2 H12.4 V13.6 H8.8 Z" fill="#1797e0"/></svg>
<span class="t" style="left:471.00px;top:300px;font-size:11px;line-height:13px;letter-spacing:-0.312px;">BrowserAndDataLoop_Sample</span>
<svg style="left:451px;top:316px;" width="17" height="16" viewBox="0 0 17 16"><path d="M2,9.5 V0.9 H9.5 L13.8,5 V10.2" fill="none" stroke="#6a6a6a" stroke-width="1.3"/><path d="M9.3,0.9 V5.2 H13.8" fill="none" stroke="#6a6a6a" stroke-width="1.1"/><circle cx="6.2" cy="12.5" r="2.2" fill="#fff" stroke="#1797e0" stroke-width="2"/><path d="M8.8,11.2 H17 V15.2 H15.3 V13.6 H14.2 V15.2 H12.4 V13.6 H8.8 Z" fill="#1797e0"/></svg>
<span class="t" style="left:471.00px;top:319px;font-size:11px;line-height:13px;letter-spacing:-0.353px;">BrowserLoop_Sample</span>
<svg style="left:451px;top:335px;" width="17" height="16" viewBox="0 0 17 16"><path d="M2,9.5 V0.9 H9.5 L13.8,5 V10.2" fill="none" stroke="#6a6a6a" stroke-width="1.3"/><path d="M9.3,0.9 V5.2 H13.8" fill="none" stroke="#6a6a6a" stroke-width="1.1"/><circle cx="6.2" cy="12.5" r="2.2" fill="#fff" stroke="#1797e0" stroke-width="2"/><path d="M8.8,11.2 H17 V15.2 H15.3 V13.6 H14.2 V15.2 H12.4 V13.6 H8.8 Z" fill="#1797e0"/></svg>
<span class="t" style="left:471.00px;top:338px;font-size:11px;line-height:13px;letter-spacing:-0.393px;">DataLoop_Sample</span>
<svg style="left:451px;top:354px;" width="17" height="16" viewBox="0 0 17 16"><path d="M2,9.5 V0.9 H9.5 L13.8,5 V10.2" fill="none" stroke="#6a6a6a" stroke-width="1.3"/><path d="M9.3,0.9 V5.2 H13.8" fill="none" stroke="#6a6a6a" stroke-width="1.1"/><circle cx="6.2" cy="12.5" r="2.2" fill="#fff" stroke="#1797e0" stroke-width="2"/><path d="M8.8,11.2 H17 V15.2 H15.3 V13.6 H14.2 V15.2 H12.4 V13.6 H8.8 Z" fill="#1797e0"/></svg>
<span class="t" style="left:471.00px;top:357px;font-size:11px;line-height:13px;letter-spacing:-0.375px;">SimpleTest_Sample</span>
<span class="t" style="left:472.50px;top:376px;font-size:11px;line-height:13px;letter-spacing:-0.500px;">[None]</span>
<div style="left:156px;top:529px;width:549px;height:96px;background:#f5f6f8;border:1px solid #8893a8;"></div>
<span class="t" style="left:169.00px;top:554px;font-size:11px;line-height:13px;font-weight:bold;letter-spacing:0.354px;">BrowserAndDataLoop_Sample</span>
<span class="t" style="left:169.00px;top:573px;font-size:11px;line-height:13px;letter-spacing:0.107px;">A keyword test.</span>
<div style="left:159px;top:633px;width:543px;height:1px;background:#8a93a5;"></div>
<div style="left:468px;top:643px;width:75px;height:23px;background:#ebfaff;border:1px solid #74829a;"></div>
<div style="left:548px;top:643px;width:75px;height:23px;background:#fff;border:1px solid #74829a;"></div>
<div style="left:628px;top:643px;width:75px;height:23px;background:#fff;border:1px solid #74829a;"></div>
<span class="t" style="left:497.00px;top:648px;font-size:11px;line-height:13px;letter-spacing:-0.700px;">OK</span>
<span class="t" style="left:568.00px;top:648px;font-size:11px;line-height:13px;letter-spacing:-0.400px;">Cancel</span>
<span class="t" style="left:653.00px;top:648px;font-size:11px;line-height:13px;letter-spacing:-0.667px;"><u>H</u>elp</span>
<svg style="left:490px;top:150px;" width="95" height="50" viewBox="0 0 95 50"><path d="M87.4,6 L24,35.5" stroke="#ff8800" stroke-width="5" stroke-linecap="round"/><path d="M5,41.7 L19.7,25 L21.5,34.5 L27,43 Z" fill="#ff8800"/></svg>
</body></html>
